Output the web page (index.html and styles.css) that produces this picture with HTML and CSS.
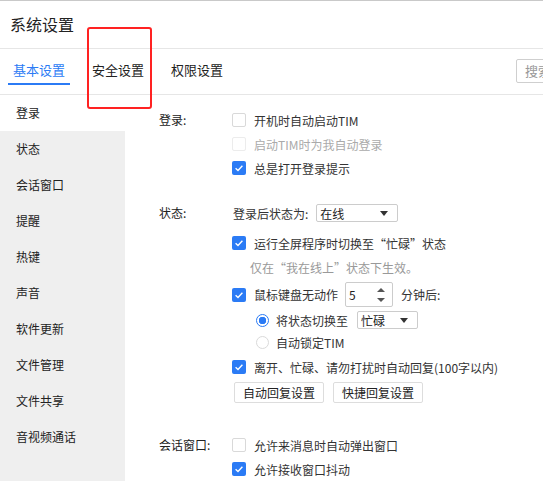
FILE: index.html
```html
<!DOCTYPE html>
<html lang="zh-CN">
<head>
<meta charset="utf-8">
<title>系统设置</title>
<link rel="stylesheet" href="styles.css">
</head>
<body>
<div class="window">
  <div class="titlebar">系统设置</div>
  <div class="tabs">
    <div class="tab active">基本设置</div>
    <div class="tab">安全设置</div>
    <div class="tab">权限设置</div>
    <div class="search">搜索</div>
  </div>
  <div class="main">
    <div class="sidebar">
      <div class="nav-item selected">登录</div>
      <div class="nav-item">状态</div>
      <div class="nav-item">会话窗口</div>
      <div class="nav-item">提醒</div>
      <div class="nav-item">热键</div>
      <div class="nav-item">声音</div>
      <div class="nav-item">软件更新</div>
      <div class="nav-item">文件管理</div>
      <div class="nav-item">文件共享</div>
      <div class="nav-item">音视频通话</div>
    </div>
    <div class="content">
      <div class="group g-login">
        <div class="label">登录:</div>
        <div class="options">
          <div class="row"><span class="cb"></span><span class="txt">开机时自动启动TIM</span></div>
          <div class="row"><span class="cb disabled"></span><span class="txt dim">启动TIM时为我自动登录</span></div>
          <div class="row"><span class="cb checked"><svg viewBox="0 0 14 14" width="14" height="14"><path d="M3.6 7.2 L6 9.4 L10.4 4.8" fill="none" stroke="#fff" stroke-width="1.4"/></svg></span><span class="txt">总是打开登录提示</span></div>
        </div>
      </div>
      <div class="group g-status">
        <div class="label">状态:</div>
        <div class="options">
          <div class="row"><span class="txt plain">登录后状态为:</span><div class="select sel-online"><span>在线</span><svg class="arrow" viewBox="0 0 8 5" width="8" height="5"><path d="M0 0 H8 L4 5 Z" fill="#333"/></svg></div></div>
          <div class="row mt6"><span class="cb checked"><svg viewBox="0 0 14 14" width="14" height="14"><path d="M3.6 7.2 L6 9.4 L10.4 4.8" fill="none" stroke="#fff" stroke-width="1.4"/></svg></span><span class="txt">运行全屏程序时切换至“忙碌”状态</span></div>
          <div class="row note">仅在“我在线上”状态下生效。</div>
          <div class="row spin-row"><span class="cb checked"><svg viewBox="0 0 14 14" width="14" height="14"><path d="M3.6 7.2 L6 9.4 L10.4 4.8" fill="none" stroke="#fff" stroke-width="1.4"/></svg></span><span class="txt">鼠标键盘无动作</span>
            <div class="spinner"><span>5</span><svg class="spin-arrows" viewBox="0 0 8 14" width="8" height="14"><path d="M0 4 L4 0 L8 4 Z" fill="#555"/><path d="M0 10 H8 L4 14 Z" fill="#555"/></svg></div>
            <span class="txt plain">分钟后:</span></div>
          <div class="row radio-row"><span class="radio on"></span><span class="rtxt">将状态切换至</span><div class="select sel-busy"><span>忙碌</span><svg class="arrow" viewBox="0 0 8 5" width="8" height="5"><path d="M0 0 H8 L4 5 Z" fill="#333"/></svg></div></div>
          <div class="row radio-row"><span class="radio"></span><span class="rtxt">自动锁定TIM</span></div>
          <div class="row mt2"><span class="cb checked"><svg viewBox="0 0 14 14" width="14" height="14"><path d="M3.6 7.2 L6 9.4 L10.4 4.8" fill="none" stroke="#fff" stroke-width="1.4"/></svg></span><span class="txt">离开、忙碌、请勿打扰时自动回复(100字以内)</span></div>
          <div class="buttons"><div class="btn">自动回复设置</div><div class="btn">快捷回复设置</div></div>
        </div>
      </div>
      <div class="group g-chat">
        <div class="label">会话窗口:</div>
        <div class="options">
          <div class="row"><span class="cb"></span><span class="txt">允许来消息时自动弹出窗口</span></div>
          <div class="row"><span class="cb checked"><svg viewBox="0 0 14 14" width="14" height="14"><path d="M3.6 7.2 L6 9.4 L10.4 4.8" fill="none" stroke="#fff" stroke-width="1.4"/></svg></span><span class="txt">允许接收窗口抖动</span></div>
        </div>
      </div>
    </div>
  </div>
  <div class="highlight"></div>
</div>
</body>
</html>
```
FILE: styles.css
```css
* { box-sizing: border-box; }
html, body { margin: 0; padding: 0; }
body {
  width: 543px;
  height: 481px;
  overflow: hidden;
  background: #fff;
  font-family: "Microsoft YaHei", "Noto Sans CJK SC", "Noto Sans", sans-serif;
  color: #222;
}
.window {
  position: relative;
  height: 481px;
  border-top: 1px solid #c9c9c9;
  display: flex;
  flex-direction: column;
}
.titlebar {
  height: 47px;
  line-height: 47px;
  padding-left: 10px;
  font-size: 16px;
  color: #222;
}
.tabs {
  height: 47px;
  border-top: 1px solid #e6e6e6;
  border-bottom: 1px solid #e6e6e6;
  display: flex;
  align-items: flex-start;
  padding-left: 8px;
  padding-top: 8px;
  gap: 17px;
  overflow: hidden;
}
.tab {
  flex-shrink: 0;
  width: 62px;
  text-align: center;
  height: 28px;
  line-height: 26px;
  font-size: 13px;
  color: #222;
  border-bottom: 2px solid transparent;
}
.tab.active {
  color: #2b7bf5;
  border-bottom-color: #2b7bf5;
}
.search {
  flex-shrink: 0;
  margin-left: 271px;
  margin-top: 2px;
  width: 70px;
  height: 24px;
  line-height: 22px;
  border: 1px solid #cfcfcf;
  border-radius: 2px;
  padding-left: 8px;
  font-size: 13px;
  color: #999;
}
.main {
  flex: 1;
  display: flex;
  min-height: 0;
}
.sidebar {
  width: 125px;
  flex-shrink: 0;
  background: #efefef;
}
.nav-item {
  height: 36px;
  line-height: 36px;
  padding-left: 16px;
  font-size: 12px;
  color: #222;
}
.nav-item.selected { background: #fff; }
.content {
  flex: 1;
  padding-left: 34px;
  padding-top: 13px;
  font-size: 12px;
  color: #333;
}
.group { display: flex; }
.g-status { margin-top: 21px; }
.g-chat { margin-top: 30px; }
.label {
  width: 73px;
  flex-shrink: 0;
  line-height: 24px;
  height: 24px;
  color: #222;
}
.options { display: flex; flex-direction: column; }
.row {
  height: 24px;
  display: flex;
  align-items: center;
  white-space: nowrap;
}
.mt6 { margin-top: 6px; }
.mt2 { margin-top: 2px; }
.cb {
  width: 14px;
  height: 14px;
  border: 1px solid #d9d9d9;
  border-radius: 2px;
  background: #fff;
  flex-shrink: 0;
  display: flex;
}
.cb.disabled { border-color: #ececec; }
.cb.checked {
  border: none;
  background: #2b7bf5;
}
.txt { margin-left: 8px; color: #333; }
.txt.plain { margin-left: 1px; }
.txt.dim { color: #aaa; }
.note { padding-left: 18px; color: #999; }
.select {
  position: relative;
  height: 18px;
  border: 1px solid #cccccc;
  border-radius: 2px;
  display: flex;
  align-items: center;
  padding-left: 3px;
  justify-content: space-between;
  padding-right: 9px;
  color: #222;
}
.sel-online { width: 82px; margin-left: 8px; }
.sel-busy { width: 61px; margin-left: 9px; }
.spin-row { height: 25px; margin-top: 3px; }
.spinner {
  width: 48px;
  height: 25px;
  margin-left: 7px;
  margin-right: 7px;
  border: 1px solid #cccccc;
  border-radius: 2px;
  display: flex;
  align-items: center;
  justify-content: space-between;
  padding-left: 3px;
  padding-right: 7px;
  color: #222;
}
.radio-row { height: 22px; padding-left: 24px; }
.spin-row + .radio-row { margin-top: 2px; }
.radio {
  width: 13px;
  height: 13px;
  border-radius: 50%;
  border: 1px solid #dadada;
  flex-shrink: 0;
  background: #fff;
}
.radio.on {
  border: 1px solid #2b7bf5;
  background: radial-gradient(circle, #2b7bf5 0 3.5px, #fff 4px);
}
.rtxt { margin-left: 7px; }
.buttons {
  display: flex;
  gap: 9px;
  margin-top: 3px;
  padding-left: 2px;
}
.btn {
  width: 90px;
  height: 21px;
  line-height: 19px;
  text-align: center;
  border: 1px solid #dddddd;
  border-radius: 2px;
  background: #fff;
  color: #222;
}
.highlight {
  position: absolute;
  left: 87px;
  top: 26px;
  width: 65px;
  height: 82px;
  border: 2px solid #ff2222;
  border-radius: 3px;
}
```
